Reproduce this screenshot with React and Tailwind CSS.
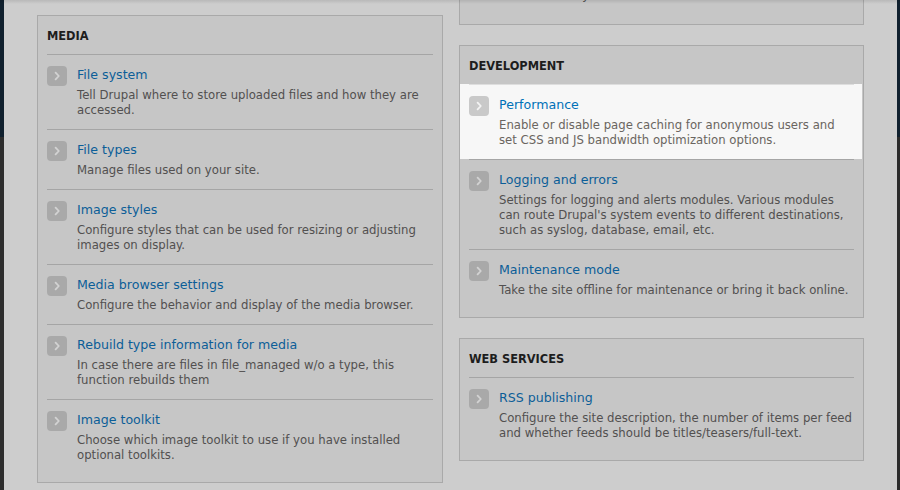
const media = [
  { title: 'File system', desc: ['Tell Drupal where to store uploaded files and how they are', 'accessed.'] },
  { title: 'File types', desc: ['Manage files used on your site.'] },
  { title: 'Image styles', desc: ['Configure styles that can be used for resizing or adjusting', 'images on display.'] },
  { title: 'Media browser settings', desc: ['Configure the behavior and display of the media browser.'] },
  {
    title: 'Rebuild type information for media',
    desc: ['In case there are files in file_managed w/o a type, this', 'function rebuilds them'],
  },
  { title: 'Image toolkit', desc: ['Choose which image toolkit to use if you have installed', 'optional toolkits.'] },
]

const development = [
  {
    title: 'Performance',
    desc: ['Enable or disable page caching for anonymous users and', 'set CSS and JS bandwidth optimization options.'],
    active: true,
  },
  {
    title: 'Logging and errors',
    desc: [
      'Settings for logging and alerts modules. Various modules',
      "can route Drupal's system events to different destinations,",
      'such as syslog, database, email, etc.',
    ],
  },
  { title: 'Maintenance mode', desc: ['Take the site offline for maintenance or bring it back online.'] },
]

const webServices = [
  {
    title: 'RSS publishing',
    desc: [
      'Configure the site description, the number of items per feed',
      'and whether feeds should be titles/teasers/full-text.',
    ],
  },
]

function Chevron({ active }) {
  return (
    <span
      className={
        'mt-[1px] mr-[10px] flex h-5 w-5 shrink-0 items-center justify-center rounded-[4px] ' +
        (active ? 'bg-[#c9c9c9]' : 'bg-[#a9a9a9]')
      }
    >
      <svg width="20" height="20" viewBox="0 0 20 20" fill="none">
        <path
          d="M8.6 6.6 L11.8 10 L8.6 13.4"
          stroke={active ? '#f4f4f4' : '#d3d3d3'}
          strokeWidth="1.8"
          strokeLinecap="round"
          strokeLinejoin="round"
        />
      </svg>
    </span>
  )
}

function Item({ item }) {
  const active = item.active
  return (
    <li className={active ? '-ml-[9px] -mr-[8px] bg-[#f7f7f7] pl-[9px] pr-[8px]' : ''}>
      <div className={'flex border-t pt-[10px] pb-[11px] ' + (active ? 'border-[#dedede]' : 'border-[#a5a5a5]')}>
        <Chevron active={active} />
        <div>
          <a className={'block pt-[1px] text-[12.6px] leading-[18px] ' + (active ? 'text-[#0071b8]' : 'text-[#0c5e98]')}>
            {item.title}
          </a>
          <p className={'mt-[4px] text-[11.7px] leading-[15px] whitespace-nowrap ' + (active ? 'text-[#6a6560]' : 'text-[#525050]')}>
            {item.desc.map((line, i) => (
              <span key={i} className="block">
                {line}
              </span>
            ))}
          </p>
        </div>
      </div>
    </li>
  )
}

function Panel({ title, items, width }) {
  return (
    <div className={'border border-[#a9a9a9] bg-[#c6c6c6] px-[9px] pb-[8px] ' + width}>
      <h3 className="pt-[11px] pb-[9px] text-[11.4px] leading-[18px] font-bold uppercase text-[#1d1d1d]">{title}</h3>
      <ul>
        {items.map((item) => (
          <Item key={item.title} item={item} />
        ))}
      </ul>
    </div>
  )
}

export default function App() {
  return (
    <div className="relative flex h-[490px] w-[900px] overflow-hidden bg-[#cdcdcd] font-['DejaVu_Sans',sans-serif]">
      <div className="flex w-[4px] shrink-0 flex-col">
        <div className="h-[137px] bg-[#10202e]" />
        <div className="flex-1 bg-[#2d2d2d]" />
      </div>

      <div className="flex flex-1 gap-[16px] pl-[33px]">
        <div className="pt-[15px]">
          <Panel title="Media" items={media} width="w-[406px]" />
        </div>

        <div className="flex w-[405px] flex-col gap-[20px]">
          <div className="flex h-[25px] flex-col justify-end overflow-hidden border-x border-b border-[#a9a9a9] bg-[#c6c6c6] px-[9px]">
            <p className="pb-[21px] pl-[30px] text-[11.7px] leading-[15px] whitespace-nowrap text-[#525050]">
              Set the date by the site's time zone and locale.
            </p>
          </div>
          <Panel title="Development" items={development} width="w-[405px]" />
          <Panel title="Web services" items={webServices} width="w-[405px]" />
        </div>
      </div>

      <div className="flex w-[3px] shrink-0 flex-col">
        <div className="h-[137px] bg-[#10202e]" />
        <div className="flex-1 bg-[#2b2b2b]" />
      </div>

      <div className="pointer-events-none absolute inset-x-0 top-0 h-[4px] bg-gradient-to-b from-black/10 to-transparent" />
    </div>
  )
}
